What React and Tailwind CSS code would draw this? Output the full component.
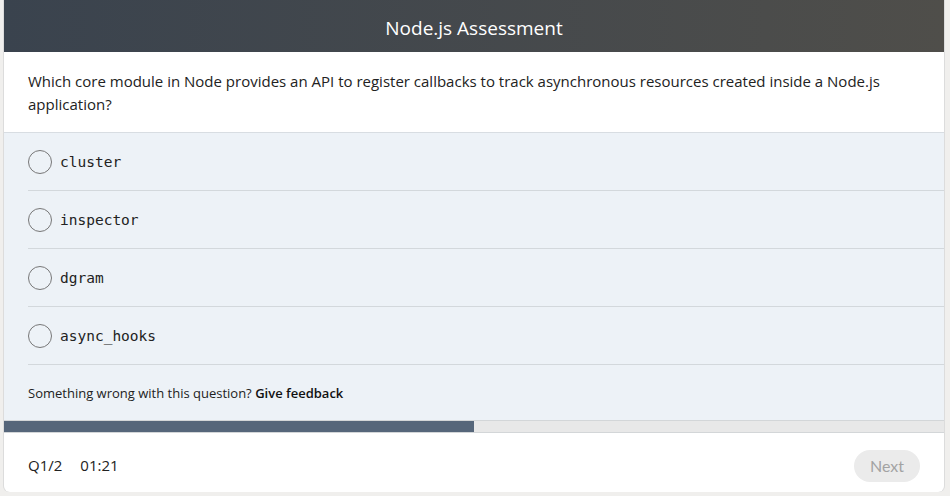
export default function App() {
  const options = ['cluster', 'inspector', 'dgram', 'async_hooks']

  return (
    <div className="min-h-screen bg-[#f0efed] pl-1 pr-[6px] font-['Open_Sans',sans-serif]">
      <div className="flex h-[492px] flex-col overflow-hidden rounded-b-md bg-white shadow-[-1px_0_0_#dcdcdc,1px_0_0_#dcdcdc]">
        {/* Header */}
        <div className="flex h-[52px] shrink-0 items-center justify-center bg-gradient-to-r from-[#3a434e] to-[#4f4e4a] pt-1">
          <h1 className="text-[19px] text-white">Node.js Assessment</h1>
        </div>

        {/* Question */}
        <div className="h-[81px] shrink-0 border-b border-[#d8dde2] px-6 pt-[18px] text-[15px] leading-[23px] text-[#222]">
          Which core module in Node provides an API to register callbacks to track asynchronous resources created inside a Node.js application?
        </div>

        {/* Options */}
        <div className="bg-[#edf2f7]">
          {options.map(opt => (
            <div key={opt} className="ml-6">
              <div className="flex h-[57px] items-center gap-2">
                <span className="h-6 w-6 rounded-full border border-[#777]" />
                <span className="mt-[3px] font-['DejaVu_Sans_Mono',monospace] text-[14.5px] text-[#222]">{opt}</span>
              </div>
              <div className="h-px bg-[#d3d8dc]" />
            </div>
          ))}
          <div className="flex h-[55px] items-center px-6 pt-[3px] text-[13px] text-[#222]">
            Something wrong with this question?&nbsp;<span className="font-semibold text-[#111]">Give feedback</span>
          </div>
        </div>

        {/* Progress */}
        <div className="h-[13px] shrink-0 border-y border-[#d3d6d8] bg-[#e8e8e8]">
          <div className="h-full w-1/2 bg-[#56667a]" />
        </div>

        {/* Footer */}
        <div className="flex flex-1 items-center justify-between px-6 pt-[6px]">
          <div className="flex gap-[18px] text-[15px] text-[#222]">
            <span>Q1/2</span>
            <span>01:21</span>
          </div>
          <button className="h-8 rounded-full bg-[#ebebeb] px-4 font-['Lato',sans-serif] text-[16px] text-[#a3a3a3]">
            Next
          </button>
        </div>
      </div>
    </div>
  )
}
